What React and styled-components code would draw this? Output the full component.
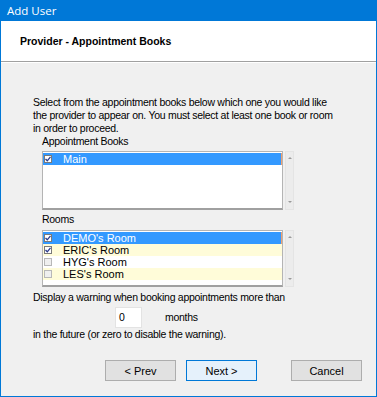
import React from "react";
import styled, { createGlobalStyle } from "styled-components";

const Global = createGlobalStyle`
  html, body { margin: 0; padding: 0; background: #ffffff; }
  body { font-family: "Liberation Sans", Arial, sans-serif; }
`;

const Window = styled.div`
  width: 377px;
  height: 397px;
  box-sizing: border-box;
  border: 1px solid #0078d7;
  border-top: none;
  background: #f0f0f0;
  display: flex;
  flex-direction: column;
  overflow: hidden;
`;

const TitleBar = styled.div`
  height: 21px;
  background: #0078d7;
  color: #ffffff;
  font-family: "Open Sans", "Noto Sans", sans-serif;
  font-size: 11.5px;
  line-height: 21px;
  padding-left: 6px;
  flex: none;
`;

const Header = styled.div`
  height: 40px;
  background: #ffffff;
  border-bottom: 1px solid #a0a0a0;
  box-shadow: 0 1px 0 #ffffff;
  display: flex;
  align-items: center;
  padding-left: 19px;
  font-size: 10.5px;
  font-weight: bold;
  color: #000;
  flex: none;
`;

const Body = styled.div`
  flex: 1;
  padding: 34px 0 0 32px;
  font-size: 10.5px;
  letter-spacing: -0.28px;
  line-height: 13px;
  color: #000;
  display: flex;
  flex-direction: column;
`;

const Paragraph = styled.div`
  white-space: nowrap;
`;

const Label = styled.div`
  margin-left: ${(p) => (p.$flush ? 0 : 9)}px;
  margin-top: ${(p) => p.$top || 0}px;
`;

const ListRow = styled.div`
  display: flex;
  align-items: stretch;
  margin-left: 9px;
  margin-top: ${(p) => p.$top || 0}px;
  gap: 2px;
`;

const ListBox = styled.div`
  width: 241px;
  height: ${(p) => p.$h}px;
  box-sizing: border-box;
  border: 1px solid #b4b4b4;
  border-bottom: 2px solid #a0a0a0;
  background: #ffffff;
  padding-top: 1px;
`;

const Item = styled.div`
  height: 12px;
  display: flex;
  align-items: center;
  background: ${(p) => (p.$selected ? "#3399ff" : p.$alt ? "#fffcd9" : "#ffffff")};
  color: ${(p) => (p.$selected ? "#ffffff" : "#000000")};
  border-right: ${(p) => (p.$selected ? "1px solid #f0a070" : "none")};
  line-height: 12px;
  font-size: 11px;
  letter-spacing: 0;
`;

const Check = styled.span`
  width: 8px;
  height: 8px;
  box-sizing: border-box;
  margin-left: 1px;
  margin-right: 11px;
  border: 1px solid ${(p) => (p.$checked ? "#7a7a7a" : "#b8b8b8")};
  background: ${(p) => (p.$checked ? "#ffffff" : "#efefef")};
  display: flex;
  align-items: center;
  justify-content: center;
  flex: none;
`;

const ScrollBar = styled.div`
  width: 9px;
  background: #ececec;
  border: 1px solid #e4e4e4;
  box-sizing: border-box;
  display: flex;
  flex-direction: column;
  justify-content: space-between;
  align-items: center;
  padding: 5px 0 6px;
`;

const Arrow = styled.span`
  width: 0;
  height: 0;
  border-left: 2px solid transparent;
  border-right: 2px solid transparent;
  ${(p) =>
    p.$down
      ? "border-top: 2px solid #9a9a9a;"
      : "border-bottom: 2px solid #9a9a9a;"}
`;

const MonthsRow = styled.div`
  display: flex;
  align-items: center;
  margin-top: 3px;
  margin-left: 82px;
`;

const NumberBox = styled.div`
  width: 27px;
  height: 21px;
  box-sizing: border-box;
  background: #ffffff;
  border: 1px solid #e3e3e3;
  padding-left: 3px;
  line-height: 19px;
`;

const Unit = styled.span`
  margin-left: 23px;
`;

const Footer = styled.div`
  display: flex;
  margin-top: 19px;
  margin-left: 72px;
`;

const Button = styled.button`
  width: 71px;
  height: 21px;
  box-sizing: border-box;
  font-family: "Liberation Sans", Arial, sans-serif;
  font-size: 11px;
  color: #000;
  padding: 0;
  margin-left: ${(p) => p.$gap || 0}px;
  background: ${(p) => (p.$default ? "#e5f1fb" : "#e1e1e1")};
  border: 1px solid ${(p) => (p.$default ? "#0078d7" : "#adadad")};
  box-shadow: ${(p) => (p.$default ? "inset 0 0 0 1px #e5f1fb" : "none")};
`;

const CheckMark = () => (
  <svg width="6" height="6" viewBox="0 0 6 6">
    <path d="M0.5 3 L2.3 4.8 L5.5 0.8" fill="none" stroke="#2a3a8a" strokeWidth="1.3" />
  </svg>
);

const Row = ({ label, checked, selected, alt }) => (
  <Item $selected={selected} $alt={alt}>
    <Check $checked={checked}>{checked && <CheckMark />}</Check>
    {label}
  </Item>
);

const Scroll = () => (
  <ScrollBar>
    <Arrow />
    <Arrow $down />
  </ScrollBar>
);

export default function App() {
  return (
    <Window>
      <Global />
      <TitleBar>Add User</TitleBar>
      <Header>Provider - Appointment Books</Header>
      <Body>
        <Paragraph>
          Select from the appointment books below which one you would like
          <br />
          the provider to appear on. You must select at least one book or room
          <br />
          in order to proceed.
        </Paragraph>
        <Label>Appointment Books</Label>
        <ListRow $top={3}>
          <ListBox $h={59}>
            <Row label="Main" checked selected />
          </ListBox>
          <Scroll />
        </ListRow>
        <Label $top={3}>Rooms</Label>
        <ListRow $top={4}>
          <ListBox $h={57}>
            <Row label="DEMO's Room" checked selected />
            <Row label="ERIC's Room" checked alt />
            <Row label="HYG's Room" />
            <Row label="LES's Room" alt />
          </ListBox>
          <Scroll />
        </ListRow>
        <Label $top={4} $flush>
          Display a warning when booking appointments more than
        </Label>
        <MonthsRow>
          <NumberBox>0</NumberBox>
          <Unit>months</Unit>
        </MonthsRow>
        <div>in the future (or zero to disable the warning).</div>
        <Footer>
          <Button>&lt; Prev</Button>
          <Button $default $gap={10}>Next &gt;</Button>
          <Button $gap={34}>Cancel</Button>
        </Footer>
      </Body>
    </Window>
  );
}
